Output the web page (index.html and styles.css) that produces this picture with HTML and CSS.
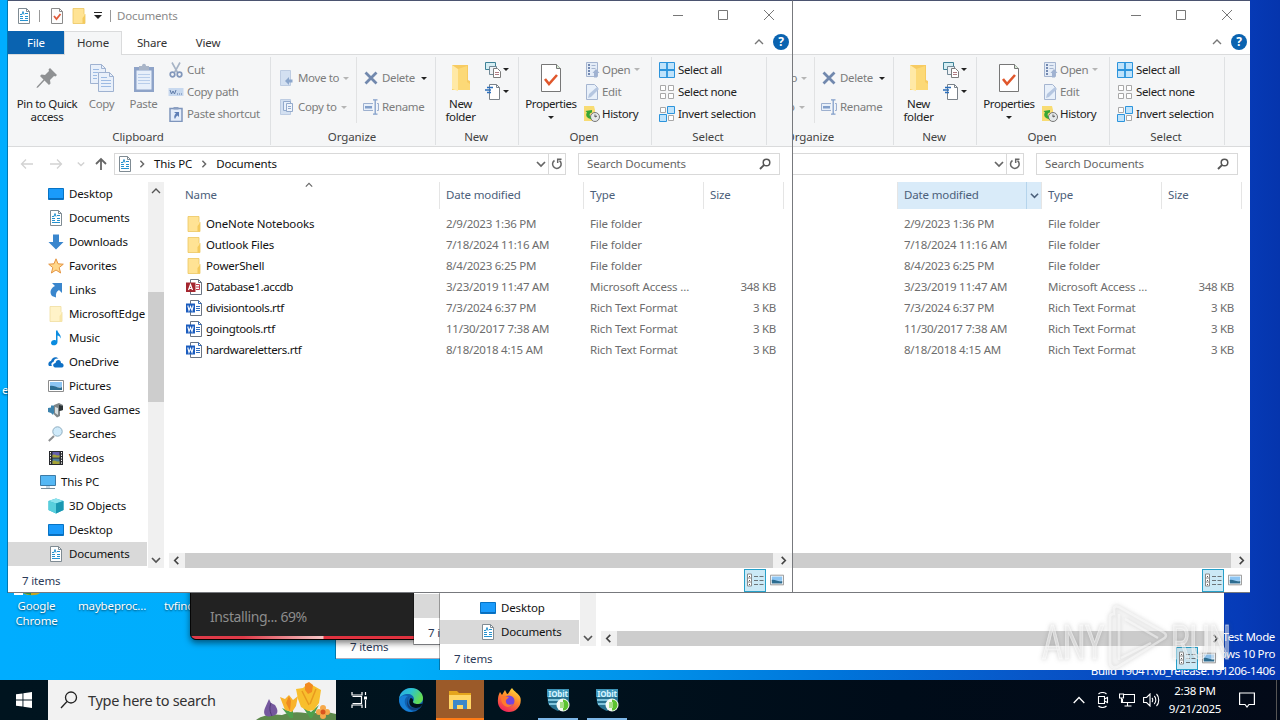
FILE: index.html
```html
<!DOCTYPE html>
<html lang="en">
<head>
  <meta charset="UTF-8">
  <meta name="viewport" content="width=device-width, initial-scale=1.0">
  <title>Documents</title>
  <link rel="stylesheet" href="styles.css">
</head>
<body>

  <!-- Icons -->
  <svg class="sprite" xmlns="http://www.w3.org/2000/svg">
    <symbol id="i-doc" viewBox="0 0 16 16"><path d="M2.500 .5h8l3 3v12h-11z" fill="#fff" stroke="#7f8b93"/><path d="M10.500 .5v3h3" fill="none" stroke="#7f8b93"/><path d="M4 6.500h2l1-3 1 3M9 5.500h3M4 8.500h3M9 8.500h3M4 10.500h3M9 10.500h3M4 12.500h8" fill="none" stroke="#2592cf"/></symbol>
    <symbol id="i-props" viewBox="0 0 16 16"><path d="M2.500 .5h8l3 3v12h-11z" fill="#fdfdfd" stroke="#8b8b8b"/><path d="M10.500 .5v3h3" fill="none" stroke="#8b8b8b"/><path d="M5 8l2.500 3 4-5" fill="none" stroke="#e05a3a" stroke-width="1.800"/></symbol>
    <symbol id="i-folder" viewBox="0 0 16 16"><path d="M2 .5h11v5l1 1v9H2z" fill="#ffe394" stroke="#ecc75f" stroke-width=".8"/><path d="M11.500 15.500V10l2.500-3v8.500z" fill="#f4ca5c"/></symbol>
    <symbol id="i-folder-pale" viewBox="0 0 16 16"><path d="M2 .5h11v5l1 1v9H2z" fill="#fff3c8" stroke="#f0dda0" stroke-width=".8"/><path d="M11.500 15.500V10l2.500-3v8.500z" fill="#f8e6a8"/></symbol>
    <symbol id="i-desktop" viewBox="0 0 16 16"><path d="M.5 2.500h15v11H.5z" fill="#1a9bfb" stroke="#0773c4"/><path d="M1 12h14v1H1z" fill="#0a6dbd"/></symbol>
    <symbol id="i-down" viewBox="0 0 16 16"><path d="M5 .5h6V8h4.500L8 15.500.5 8H5z" fill="#3a86cd"/></symbol>
    <symbol id="i-star" viewBox="0 0 16 16"><path d="M8 .8l2 5 5.300.400-4.100 3.400 1.400 5.400L8 12l-4.600 3 1.400-5.400L.7 6.200 6 5.800z" fill="#ffd78a" stroke="#e49442"/></symbol>
    <symbol id="i-link" viewBox="0 0 16 16"><path d="M4 1h10v10l-3-3c-2.500 1.500-3.500 3.500-3 7.500L4 14C1 10 3 6 7 4z" fill="#3a86cd"/></symbol>
    <symbol id="i-music" viewBox="0 0 16 16"><path d="M8 .5h1.500c.5 3 4 4 3 8-.5-2-1.500-3-3-3V12c0 4-6.500 4.500-6.500 1 0-2.500 3-3.500 5-2.500z" fill="#0a8ce0"/></symbol>
    <symbol id="i-onedrive" viewBox="0 0 16 16"><path d="M1 12c-2-3 1-5 2-5C4 3 8 2 10.500 4.500 7 4 6 6 5.500 8 3 8.500 3 11 4 12zM6 13c-2-2 0-4 1.500-4C8 5 13 5 13 9c3 0 3.500 4 1 4.500H7z" fill="#0f70c5"/></symbol>
    <symbol id="i-picture" viewBox="0 0 16 16"><path d="M.5 2.500h15v11H.5z" fill="#fff" stroke="#8c8c8c"/><path d="M2 4h12v5H2z" fill="#8cc5f3"/><path d="M2 8c4-1 8 3 12 1v3H2z" fill="#2d6d91"/></symbol>
    <symbol id="i-games" viewBox="0 0 16 16"><path d="M0 6l3-.5V3.500h3l1 5.500-2 4-2-2-3-1z" fill="#3d83ad"/><path d="M6 3l5-2 4 2v5l-3 1v5l-3 1.500-3-3z" fill="#7f8688"/><path d="M11 3l4 1v4l-4 1z" fill="#2d3436"/><path d="M7 5l3 1v7l-3-2z" fill="#d8dfe1"/></symbol>
    <symbol id="i-searches" viewBox="0 0 16 16"><path d="M6 10L.8 15" stroke="#8d8f91" stroke-width="2"/><circle cx="9.500" cy="5.500" r="4.700" fill="#cfeafa" stroke="#8fadbf"/></symbol>
    <symbol id="i-video" viewBox="0 0 16 16"><path d="M1 1h14v14H1z" fill="#27292d"/><path d="M4.500 2h7v5.500h-7z" fill="#655fae"/><path d="M4.500 8.500h7V14h-7z" fill="#4e7f9d"/><path d="M4.500 5c3-2 4 2 7 0v2.500h-7zM4.500 11c3-2 4 2 7 0v3h-7z" fill="#a5a336"/><path d="M2.500 2v12M13.500 2v12" stroke="#fff" stroke-dasharray="1.300 1.300"/></symbol>
    <symbol id="i-pc" viewBox="0 0 16 16"><path d="M.5 1.500h15v10H.5z" fill="#55b8f5" stroke="#3d7ba6"/><path d="M6 12h4v2H6z" fill="#c5d8e5"/><path d="M1 14.500h14" stroke="#778c99"/></symbol>
    <symbol id="i-cube" viewBox="0 0 16 16"><path d="M8 .5L15.500 3v9L8 15.500.5 12V3z" fill="#2cb3cb"/><path d="M8 .5L15.500 3 8 5.500.5 3z" fill="#8be3ee"/><path d="M.5 3L8 5.500v10L.5 12z" fill="#58cfdd"/><path d="M8 5.500L15.500 3v9L8 15.500z" fill="#1a97b1"/></symbol>
    <symbol id="i-word" viewBox="0 0 16 16"><path d="M4.500.5h8l3 3v12h-11z" fill="#fff" stroke="#6a7483"/><path d="M12.500.5v3h3M10 6.500h4M10 8.500h4M10 10.500h4" fill="none" stroke="#2f6cc0"/><path d="M0 3.500h9v9H0z" fill="#1b5cbe"/><path d="M1.800 5.500L3 10.500l1.500-4 1.500 4 1.200-5" fill="none" stroke="#fff" stroke-width="1.100"/></symbol>
    <symbol id="i-access" viewBox="0 0 16 16"><path d="M4.500.5h8l3 3v12h-11z" fill="#fff" stroke="#6a7483"/><path d="M12.500.5v3h3" fill="none" stroke="#6a7483"/><path d="M10 5.500h3.500v5H10M10 8h3.500" fill="none" stroke="#c0394a"/><path d="M0 3.500h9.500v9.500H0z" fill="#a4262f"/><path d="M2.500 11l2-5.500 2 5.500M3 9.500h3" fill="none" stroke="#fff" stroke-width="1.200"/></symbol>
    <symbol id="i-pin" viewBox="0 0 24 24"><path d="M15 2l7 7-1.500 1.500-1.500-.5-4 4 .5 3.500L14 19l-4.500-4.500L3 21.500l-1.500.5.5-1.500L8.500 13.500 5 10l1.500-1.500 3.500.5 4-4-.5-1.500z" fill="#8f9193"/></symbol>
    <symbol id="i-copy" viewBox="0 0 26 30"><g fill="#e9f0fa" stroke="#9fb2d1"><path d="M1.500 1.500h11l4 4v15h-15z"/><path d="M9.500 9.500h11l4 4v15h-15z"/></g><path d="M12.500 1.500v4h4M20.500 9.500v4h4" fill="none" stroke="#9fb2d1"/><path d="M4 6.500h6M4 9.500h5M4 12.500h4M4 15.500h4M12 14.500h6M12 17.500h10M12 20.500h10M12 23.500h10" stroke="#9cbae3"/></symbol>
    <symbol id="i-paste" viewBox="0 0 24 30"><path d="M2 4h20v25H2z" fill="#8ea3c8"/><path d="M4.500 7.500h15v19h-15z" fill="#e7effa"/><path d="M7 3h3c0-3 4-3 4 0h3v4H7z" fill="#a9b5c8"/><path d="M6 11.500h12M6 14.500h12M6 17.500h12M6 20.500h12" stroke="#b8cdea"/></symbol>
    <symbol id="i-cut" viewBox="0 0 16 16"><path d="M4 .5l5.500 10M12 .5L6.500 10.500" stroke="#a7b4c6" stroke-width="1.600"/><g fill="none" stroke="#8297bb" stroke-width="1.700"><circle cx="4.500" cy="12.500" r="2.300"/><circle cx="11.500" cy="12.500" r="2.300"/></g></symbol>
    <symbol id="i-path" viewBox="0 0 16 16"><path d="M.5 4h15v8H.5z" fill="#c8d9ef"/><path d="M2 6l1.500 4L5 7l1.500 3L8 6M9 10h1M11 10h1M13 10h1" fill="none" stroke="#5f7ba8"/></symbol>
    <symbol id="i-shortcut" viewBox="0 0 16 16"><path d="M2 2.500h12v13H2z" fill="#e4edfa" stroke="#7e95bc" stroke-width="1.500"/><path d="M5.500 1h5v2.500h-5z" fill="#8ca0c2"/><path d="M6 6h5v5L9.500 9.500C8 10.500 7.500 12 7 13c-1.500-2-.5-4.500 1-5.500z" fill="#5e7fb6"/></symbol>
    <symbol id="i-move" viewBox="0 0 16 16"><path d="M1.500.5h10v15h-10z" fill="#d3e0f1" stroke="#bdcce2"/><path d="M6 11l4-4v2.500h3.500v3H10V15z" fill="#8ba6cc"/></symbol>
    <symbol id="i-copyto" viewBox="0 0 16 16"><path d="M1.500.5h10v15h-10z" fill="#d3e0f1" stroke="#bdcce2"/><path d="M4.500 2.500h7v9h-7z" fill="#e8f0fa" stroke="#93aacc"/><path d="M7.500 4.500h6v8h-6z" fill="#eff4fb" stroke="#93aacc"/><path d="M9 7.500h3M9 9.500h3" stroke="#93aacc"/></symbol>
    <symbol id="i-delete" viewBox="0 0 16 16"><path d="M2.500 2.500l11 11M13.500 2.500l-11 11" stroke="#7188ad" stroke-width="2.800"/></symbol>
    <symbol id="i-rename" viewBox="0 0 16 16"><path d="M10 4.500H.5v7H10M14 4.500h1.500v7H14" fill="#e8f0fa" stroke="#9db0cf"/><path d="M2 7h7v2.500H2z" fill="#829fca"/><path d="M10 .8h4.500M12.200 1v14M10 15.200h4.500" stroke="#829fca" stroke-width="1.300"/></symbol>
    <symbol id="i-newfolder" viewBox="0 0 22 28"><path d="M2 1h16v15l2 1v9H2z" fill="#f7cb62"/><path d="M2 1l6 4v22l-6-2z" fill="#ffe9a6"/><path d="M8 5l9-3v16l3 2v6H8z" fill="#fcd977"/></symbol>
    <symbol id="i-newitem" viewBox="0 0 16 16"><path d="M.5.500h10v7H.5z" fill="#d6eef3" stroke="#3f8297"/><path d="M4.500 4.500h7v8h-7z" fill="#eef2f5" stroke="#718997"/><path d="M8.500 6.500h4l3 3v6h-7z" fill="#fff" stroke="#7b7b7b"/><path d="M10 10.500h4M10 12.500h4" stroke="#b07c83"/></symbol>
    <symbol id="i-easy" viewBox="0 0 16 16"><path d="M4.500 .5h7l3 3v12h-10z" fill="#fff" stroke="#7a828a"/><path d="M11.500.5v3h3" fill="none" stroke="#7a828a"/><path d="M2 3.500h6M0 6h6M2 8.500h4" stroke="#2a6ebb" stroke-width="1.300"/></symbol>
    <symbol id="i-bigprops" viewBox="0 0 24 30"><path d="M2.500 1.500h15l4 4v23h-19z" fill="#fff" stroke="#777"/><path d="M17.500 1.500v4h4" fill="#d8ecd6" stroke="#777"/><path d="M6 16l4 5 8-9" fill="none" stroke="#e0572c" stroke-width="2.600"/></symbol>
    <symbol id="i-open" viewBox="0 0 16 16"><path d="M2.500.5h11v14h-11z" fill="#e4ecf7" stroke="#a5b5d0"/><path d="M4 3h2M4 6h2M4 9h2M4 12h2" stroke="#7389b1" stroke-width="2"/><path d="M7.500 3.500h4M7.500 6.500h4" stroke="#a5b5d0"/><path d="M12 7l3.500 4H13v4.500h-3V11H8.500z" fill="#a0b2d1"/></symbol>
    <symbol id="i-edit" viewBox="0 0 16 16"><path d="M2.500.5h8l3 3v12h-11z" fill="#e8f0fa" stroke="#a5b5d0"/><path d="M4 14l1-4 8-7 2 2-8 8z" fill="#b5c6e0"/></symbol>
    <symbol id="i-history" viewBox="0 0 16 16"><path d="M0 0h10l1 4v11H0z" fill="#f8dc73"/><circle cx="11" cy="11" r="4.500" fill="#e4e8e9" stroke="#777"/><path d="M11 8.500V11l2-1" fill="none" stroke="#555"/><path d="M8 4v2.500C5 7 5 9 7.500 13 3 13 1 9 3 6.500L1.500 5z" fill="#36a635"/></symbol>
    <symbol id="i-selall" viewBox="0 0 16 16"><path d="M.5.500h15v15H.5z" fill="#bfe3fb" stroke="#2c94dc"/><path d="M8 0v16M0 8h16" stroke="#2c94dc" stroke-width="1.800"/></symbol>
    <symbol id="i-selnone" viewBox="0 0 16 16"><path d="M1.500 1.500h5v5h-5zM9.500 1.500h5v5h-5zM1.500 9.500h5v5h-5zM9.500 9.500h5v5h-5z" fill="#fff" stroke="#a8a8a8"/></symbol>
    <symbol id="i-selinv" viewBox="0 0 16 16"><path d="M1.500 1.500h5v5h-5zM9.500 9.500h5v5h-5z" fill="#fff" stroke="#a8a8a8"/><path d="M8.500.500h7v7h-7zM.5 8.500h7v7h-7z" fill="#bfe3fb" stroke="#2c94dc"/></symbol>
    <symbol id="i-chev-down" viewBox="0 0 10 10"><path d="M1 3l4 4 4-4" fill="none" stroke="currentColor" stroke-width="1.700"/></symbol>
    <symbol id="i-chev-up" viewBox="0 0 10 10"><path d="M1 7l4-4 4 4" fill="none" stroke="currentColor" stroke-width="1.400"/></symbol>
    <symbol id="i-chev-left" viewBox="0 0 10 10"><path d="M7 1L3 5l4 4" fill="none" stroke="currentColor" stroke-width="1.800"/></symbol>
    <symbol id="i-chev-right" viewBox="0 0 10 10"><path d="M3 1l4 4-4 4" fill="none" stroke="currentColor" stroke-width="1.800"/></symbol>
    <symbol id="i-arrow" viewBox="0 0 14 14"><path d="M13 7H1.500M6 2.500L1.500 7 6 11.500" fill="none" stroke="currentColor" stroke-width="1.300"/></symbol>
    <symbol id="i-arrow-up" viewBox="0 0 14 14"><path d="M7 13V2M2 7l5-5 5 5" fill="none" stroke="currentColor" stroke-width="1.800"/></symbol>
    <symbol id="i-refresh" viewBox="0 0 12 12"><path d="M8.500 2.500A4.300 4.300 0 1 1 3.500 2.700" fill="none" stroke="#666" stroke-width="1.500"/><path d="M1.500 1.200h3.800V5" fill="none" stroke="#666" stroke-width="1.500"/></symbol>
    <symbol id="i-find" viewBox="0 0 12 12"><circle cx="7.500" cy="4.500" r="3.300" fill="none" stroke="#555" stroke-width="1.500"/><path d="M5.200 6.800L1 11" stroke="#555" stroke-width="1.900"/></symbol>
    <symbol id="i-details" viewBox="0 0 18 14"><path d="M1.500 1h4v12h-4zM1.500 5h4M1.500 9h4" fill="#fff" stroke="#8a8a8a"/><path d="M3.500 2v10" stroke="#555" stroke-dasharray="1 3" stroke-dashoffset="-1"/><path d="M8 3.500h4M13.500 3.500h4M8 7.500h4M13.500 7.500h4M8 11.500h4M13.500 11.500h4" stroke="#6c7478"/></symbol>
    <symbol id="i-iobit" viewBox="0 0 24 24"><path d="M1 1h22v14c-3 4-7 6-11 8C7 21 3 18 2 15z" fill="#27718f"/><path d="M1 1h22v8H1z" fill="#3d94b8"/><path d="M2 11h15v2H2zM3 15h10v2H3z" fill="#7fc4dc"/><text x="12" y="8.500" font-size="8" font-weight="700" fill="#d8f5ff" text-anchor="middle" font-family="Noto Sans, sans-serif">IObit</text><circle cx="17" cy="17" r="6.500" fill="#f5f8f3"/><path d="M17 11.500a5.500 5.500 0 0 1 0 11z" fill="#5cc32f"/><path d="M14 14h4v6h-4z" fill="#a4df85"/></symbol>
  </svg>

  <!-- Desktop -->
  <div class="desktop">
    <div class="shortcut edge-label">e</div>
    <svg class="chrome-tip" viewBox="0 0 40 3"><path d="M6 0h9v2H6z" fill="#fff"/><path d="M15 0h17c-3 3-13 3-17 0z" fill="#c6a520"/><path d="M15 0h8v2z" fill="#26904a"/></svg>
    <div class="shortcut chrome-label">Google<br>Chrome</div>
    <div class="shortcut maybe-label">maybeproc...</div>
    <div class="shortcut tv-label">tvfind</div>
    <div class="build-info">Test Mode<br>Windows 10 Pro<br>Build 19041.vb_release.191206-1406</div>

    <div class="installer">
      <div class="installer-text">Installing... 69%</div>
      <div class="installer-bar"></div>
    </div>
  </div>

  <!-- Explorer window, one copy is opened per entry in the script -->
  <template id="explorer">
    <div class="window">
      <div class="titlebar">
        <svg class="ic"><use href="#i-doc"/></svg><i class="bar"></i>
        <svg class="ic props"><use href="#i-props"/></svg>
        <svg class="ic fold"><use href="#i-folder"/></svg>
        <svg class="qat" viewBox="0 0 8 7"><path d="M0 .5h8" stroke="#222"/><path d="M0 3h8L4 7z" fill="#222"/></svg><i class="bar"></i>
        <span class="title">Documents</span>
        <svg class="controls" viewBox="0 0 110 12"><path d="M7 6.500h10M52.500 1.500h9v9h-9zM98 1l10 10M108 1L98 11" fill="none" stroke="#777"/></svg>
      </div>
      <div class="tabs">
        <div class="tab file">File</div><div class="tab home">Home</div><div class="tab">Share</div><div class="tab">View</div>
        <svg class="collapse"><use href="#i-chev-up"/></svg><b class="help">?</b>
      </div>

      <div class="ribbon">
        <div class="group clipboard">
          <div class="tools">
            <div class="big pin"><svg><use href="#i-pin"/></svg><span>Pin to Quick<br>access</span></div>
            <div class="big copy off"><svg><use href="#i-copy"/></svg><span>Copy</span></div>
            <div class="big paste off"><svg><use href="#i-paste"/></svg><span>Paste</span></div>
            <div class="small off">
              <div><svg><use href="#i-cut"/></svg>Cut</div>
              <div><svg><use href="#i-path"/></svg>Copy path</div>
              <div><svg><use href="#i-shortcut"/></svg>Paste shortcut</div>
            </div>
          </div>
          <div class="group-name">Clipboard</div>
        </div>
        <div class="group organize">
          <div class="tools">
            <div class="small wide off move">
              <div><svg><use href="#i-move"/></svg>Move to<i class="drop"></i></div>
              <div><svg><use href="#i-copyto"/></svg>Copy to<i class="drop"></i></div>
            </div>
            <div class="small wide off del">
              <div><svg><use href="#i-delete"/></svg>Delete<i class="drop dark"></i></div>
              <div><svg><use href="#i-rename"/></svg>Rename</div>
            </div>
          </div>
          <div class="group-name">Organize</div>
        </div>
        <div class="group new">
          <div class="tools">
            <div class="big folder"><svg><use href="#i-newfolder"/></svg><span>New<br>folder</span></div>
            <div class="small">
              <div><svg><use href="#i-newitem"/></svg><i class="drop dark"></i></div>
              <div><svg><use href="#i-easy"/></svg><i class="drop dark"></i></div>
            </div>
          </div>
          <div class="group-name">New</div>
        </div>
        <div class="group open">
          <div class="tools">
            <div class="big properties"><svg><use href="#i-bigprops"/></svg><span>Properties</span><i class="drop dark"></i></div>
            <div class="small">
              <div class="off"><svg><use href="#i-open"/></svg>Open<i class="drop"></i></div>
              <div class="off"><svg><use href="#i-edit"/></svg>Edit</div>
              <div><svg><use href="#i-history"/></svg>History</div>
            </div>
          </div>
          <div class="group-name">Open</div>
        </div>
        <div class="group select">
          <div class="tools">
            <div class="small">
              <div><svg><use href="#i-selall"/></svg>Select all</div>
              <div><svg><use href="#i-selnone"/></svg>Select none</div>
              <div><svg><use href="#i-selinv"/></svg>Invert selection</div>
            </div>
          </div>
          <div class="group-name">Select</div>
        </div>
      </div>

      <div class="address">
        <svg class="nav back"><use href="#i-arrow"/></svg>
        <svg class="nav forward"><use href="#i-arrow"/></svg>
        <svg class="nav recent"><use href="#i-chev-down"/></svg>
        <svg class="nav up"><use href="#i-arrow-up"/></svg>
        <div class="path">
          <svg class="ic"><use href="#i-doc"/></svg><svg class="crumb"><use href="#i-chev-right"/></svg><span class="pc">This PC</span><svg class="crumb"><use href="#i-chev-right"/></svg><span>Documents</span>
          <svg class="history"><use href="#i-chev-down"/></svg><div class="refresh"><svg><use href="#i-refresh"/></svg></div>
        </div>
        <div class="search">Search Documents<svg><use href="#i-find"/></svg></div>
      </div>

      <div class="content">
        <div class="tree">
          <div><svg><use href="#i-desktop"/></svg>Desktop</div>
          <div><svg><use href="#i-doc"/></svg>Documents</div>
          <div><svg><use href="#i-down"/></svg>Downloads</div>
          <div><svg><use href="#i-star"/></svg>Favorites</div>
          <div><svg><use href="#i-link"/></svg>Links</div>
          <div><svg><use href="#i-folder-pale"/></svg>MicrosoftEdge</div>
          <div><svg><use href="#i-music"/></svg>Music</div>
          <div><svg><use href="#i-onedrive"/></svg>OneDrive</div>
          <div><svg><use href="#i-picture"/></svg>Pictures</div>
          <div><svg><use href="#i-games"/></svg>Saved Games</div>
          <div><svg><use href="#i-searches"/></svg>Searches</div>
          <div><svg><use href="#i-video"/></svg>Videos</div>
          <div class="root"><svg><use href="#i-pc"/></svg>This PC</div>
          <div><svg><use href="#i-cube"/></svg>3D Objects</div>
          <div><svg><use href="#i-desktop"/></svg>Desktop</div>
          <div class="selected"><svg><use href="#i-doc"/></svg>Documents</div>
        </div>
        <div class="vscroll">
          <svg><use href="#i-chev-up"/></svg><div class="thumb"></div><svg class="end"><use href="#i-chev-down"/></svg>
        </div>
        <div class="list">
          <div class="row head"><span>Name</span><span class="date">Date modified<i><svg><use href="#i-chev-down"/></svg></i></span><span>Type</span><span>Size</span><svg class="sort"><use href="#i-chev-up"/></svg></div>
          <div class="files"></div>
          <div class="hscroll"><svg><use href="#i-chev-left"/></svg><div class="thumb"></div><svg><use href="#i-chev-right"/></svg></div>
        </div>
      </div>

      <div class="status">
        <span>7 items</span>
        <div class="view-details"><svg><use href="#i-details"/></svg></div>
        <svg class="view-large"><use href="#i-picture"/></svg>
      </div>
    </div>
  </template>

  <!-- Watermark -->
  <svg class="watermark" viewBox="0 0 200 70">
    <g font-family="Roboto, sans-serif" font-size="49">
      <text x="5" y="55" textLength="62" lengthAdjust="spacingAndGlyphs">ANY</text>
      <text x="134" y="55" textLength="60" lengthAdjust="spacingAndGlyphs">RUN</text>
    </g>
    <path d="M73 58V13c0-2 2-3 4-3V5c0-3 3-3 5-2l44 25c4 2 4 5 0 7L82 62c-5 3-9 1-9-4zM82 10v46M88 15l33 19M84 54l30-15"/>
  </svg>

  <!-- Taskbar -->
  <div class="taskbar">
    <div class="start"><svg viewBox="0 0 16 16"><path d="M0 2.300l6.500-.9v6.100H0zM7.400 1.200L16 0v7.500H7.400zM0 8.400h6.500v6.200L0 13.700zM7.400 8.400H16V16l-8.600-1.200z" fill="#fff"/></svg></div>
    <div class="task-search">
      <svg class="lens" viewBox="0 0 18 18"><circle cx="11" cy="6.500" r="5.500" fill="none" stroke="#222" stroke-width="1.300"/><path d="M7 10.500L1 17" stroke="#222" stroke-width="1.300"/></svg>
      <span>Type here to search</span>
      <svg class="flowers" viewBox="0 0 80 40">
        <path d="M0 40c8-6 18-6 26-5 12-5 24-2 30-1 8-3 16-2 24 0v6z" fill="#5e8a4c"/>
        <path d="M34 38l-8-10 9 4 2-8v14M54 38L46 26l9 6 8-7-7 13" fill="#4da04b"/>
        <path d="M13 19l2 4 4 2c4 6 3 10-3 11-8 2-9-3-7-8z" fill="#75589e"/><path d="M15 23c-2 5-1 9 1 13" stroke="#4f3a76" fill="none"/>
        <path d="M24 17l5 2 4-4 4 5 5-4-2 10-4 6-7-2z" fill="#f9b42c"/><path d="M33 16l2 5-1 10-4-8z" fill="#ee8a22"/>
        <path d="M40 9l7-1 5-5 6 3 7 4-2 13-5 7-6 1-7-4-3-8z" fill="#f8bf2d"/><path d="M49 4l4-2 4 3-1 7-4 2-3-4z" fill="#f28a20"/><path d="M46 11l7 14M60 9l-6 15" stroke="#e99a1e" stroke-width="1.500"/>
        <g fill="#f6a94a"><circle cx="67" cy="28" r="3"/><circle cx="71" cy="32" r="3"/><circle cx="67" cy="36" r="3"/><circle cx="63" cy="32" r="3"/></g><circle cx="67" cy="32" r="2.500" fill="#d9541e"/>
      </svg>
    </div>
    <div class="task view"><svg viewBox="0 0 18 16"><path d="M1 0v3h10V0M1 16v-3h10v3M1.500 4.500h9v7h-9M14.500 0v3M14.500 8v8" fill="none" stroke="#fff" stroke-width="1.200"/><path d="M13 4.500h3v3h-3z" fill="#fff"/></svg></div>
    <div class="task edge"><svg viewBox="0 0 24 24">
      <defs><linearGradient id="eg" x1="0" y1="0" x2="1" y2=".4"><stop offset="0" stop-color="#2aa8e8"/><stop offset=".5" stop-color="#2cc3d0"/><stop offset="1" stop-color="#63dc53"/></linearGradient></defs>
      <circle cx="12" cy="12" r="12" fill="#0f61b0"/><path d="M0 11C1 4 6 0 12 0c7 0 12 5 12 10 0 4-3 6-6 6-3 0-4-1-4-2s1-1 1-3c0-3-3-5-6-5-4 0-8 2-9 5z" fill="url(#eg)"/><path d="M9 8c-5 2-5 12 5 15.500C7 25 0 19 0 11 2 7 6 7 9 8z" fill="#1781d8"/><path d="M11 8c-4 3-3 11 4 12 3 .400 5-.8 7-2 .5 0 .5.500 0 1-6 6-14 3-14-4 0-3 1-6 3-7z" fill="#123f7b"/><path d="M11.500 10c2 0 3 1.500 2.500 3s.5 3 5 3c4 0 5-1 4 1-2 4-10 4-12 0-1-2-1-5 .5-7z" fill="#00121b"/>
    </svg></div>
    <div class="task active"><svg viewBox="0 0 24 24"><path d="M1 3h8l2 2h12v5H1z" fill="#e5a51c"/><path d="M1 7h22v14H1z" fill="#ffd665"/><path d="M5 21v-9h14v9h-4v-4H9v4z" fill="#3d88c8"/></svg></div>
    <div class="task"><svg viewBox="0 0 24 24">
      <defs><linearGradient id="ff" x1=".8" y1="0" x2=".3" y2="1"><stop offset="0" stop-color="#ffe23d"/><stop offset=".45" stop-color="#ff8a2a"/><stop offset="1" stop-color="#f0205c"/></linearGradient></defs>
      <path d="M3 4l2 3 3-5 2 4c2 0 2-3 5-6 2 4 7 5 8.500 10C25 18 19 24 12 24 4 24 0 18 1 11c0-3 1-5 2-7z" fill="url(#ff)"/><circle cx="12" cy="13" r="5.500" fill="#7544dc"/><path d="M4 9c3-2 5 0 8 0l-3 3c-1 4 3 6 7 4-3 5-12 4-12-7z" fill="#ff7a2d"/>
    </svg></div>
    <div class="task running"><svg><use href="#i-iobit"/></svg></div>
    <div class="task running"><svg><use href="#i-iobit"/></svg></div>
    <div class="tray">
      <svg class="t-up" viewBox="0 0 12 8"><path d="M.7 7L6 1.500 11.300 7" fill="none" stroke="#fff" stroke-width="1.300"/></svg>
      <svg class="t-meet" viewBox="0 0 12 16"><path d="M1.500 4.500h6v7h-6zM7.500 7l3-1.500v5L7.500 9M1.500 2c2-2 6-2 8 0M1.500 14c2 2 6 2 8 0" fill="none" stroke="#fff" stroke-width="1.100"/></svg>
      <svg class="t-net" viewBox="0 0 16 14"><path d="M5 1.500h10.500v8H3.500V6M8.500 9.500v3M5.500 13h7M.5 1h4v4h-4zM2.500 5v5" fill="none" stroke="#fff" stroke-width="1.100"/></svg>
      <svg class="t-vol" viewBox="0 0 17 14"><path d="M.6 4.500h3L7 1v12L3.600 9.500h-3zM9 5c1 1 1 3 0 4M11.300 3c2 2 2 6 0 8M13.500 1c3 3 3 9 0 12" fill="none" stroke="#fff" stroke-width="1.100"/></svg>
      <div class="when">2:38 PM<br>9/21/2025</div>
      <svg class="t-note" viewBox="0 0 16 16"><path d="M.6 1h14.800v11.500H10L8 15l-2-2.500H.6z" fill="none" stroke="#fff" stroke-width="1.200"/></svg>
    </div>
  </div>

  <script>
    const files = [
      ['folder', 'OneNote Notebooks', '2/9/2023 1:36 PM', 'File folder', ''],
      ['folder', 'Outlook Files', '7/18/2024 11:16 AM', 'File folder', ''],
      ['folder', 'PowerShell', '8/4/2023 6:25 PM', 'File folder', ''],
      ['access', 'Database1.accdb', '3/23/2019 11:47 AM', 'Microsoft Access ...', '348 KB'],
      ['word', 'divisiontools.rtf', '7/3/2024 6:37 PM', 'Rich Text Format', '3 KB'],
      ['word', 'goingtools.rtf', '11/30/2017 7:38 AM', 'Rich Text Format', '3 KB'],
      ['word', 'hardwareletters.rtf', '8/18/2018 4:15 AM', 'Rich Text Format', '3 KB']
    ];
    const rows = files.map(f => `<div class="row"><span class="name"><svg><use href="#i-${f[0]}"/></svg>${f[1]}</span><span>${f[2]}</span><span>${f[3]}</span><span class="size">${f[4]}</span></div>`).join('');

    const desktop = document.querySelector('.desktop');
    // back to front
    ['w-bottom', 'w-left', 'w-low', 'w-back', 'w-front'].forEach(name => {
      const win = document.getElementById('explorer').content.cloneNode(true).firstElementChild;
      win.classList.add(name);
      win.querySelector('.files').innerHTML = rows;
      desktop.appendChild(win);
    });
  </script>
</body>
</html>
```
FILE: styles.css
```css
* { margin:0; padding:0; box-sizing:border-box; }
body { width:1280px; height:720px; overflow:hidden; font-family:'Noto Sans', sans-serif; font-size:11.5px; line-height:16px; letter-spacing:-0.15px; color:#111; display:flex; flex-direction:column; }
svg { display:block; flex:none; width:16px; height:16px; }
.sprite { position:absolute; width:0; height:0; }

/* Desktop */
.desktop { position:relative; height:680px; overflow:hidden; background:linear-gradient(90deg,#00adff 0,#00aef9 400px,#0092ea 640px,#0074da 840px,#0856c8 1030px,#063bb8 1240px,#0535ad 1280px); }
.shortcut { position:absolute; color:#fff; text-align:center; line-height:15px; text-shadow:0 1px 2px rgba(0,0,0,0.6); }
.edge-label { left:2px; top:382px; }
.chrome-label { left:8px; top:598px; width:57px; }
.maybe-label { left:78px; top:598px; }
.tv-label { left:164px; top:598px; }
.chrome-tip { position:absolute; left:8px; top:593px; width:40px; height:3px; }
.build-info { position:absolute; right:5px; top:628px; color:#fff; text-align:right; line-height:17px; letter-spacing:-0.35px; white-space:nowrap; }

.installer { position:absolute; z-index:2; left:190px; top:540px; width:260px; height:100px; background:#222; border:1px solid #050505; border-radius:6px; overflow:hidden; box-shadow:0 3px 6px rgba(0,0,0,0.5); display:flex; flex-direction:column; justify-content:flex-end; }
.installer-text { color:#8d8d8d; font-size:14px; letter-spacing:-0.4px; padding:0 0 11px 19px; }
.installer-bar { height:3px; background:linear-gradient(90deg,#df3a48 0 52px,#f4c6c6 132px,#e0323f 133px); }

/* Windows */
.window { position:absolute; width:785px; height:593px; background:#fff; border:1px solid #77797d; border-left:0; border-top-color:#4b5470; box-shadow:-1px 0 0 rgba(0,0,0,0.3); display:flex; flex-direction:column; }
.w-bottom { left:336px; top:66px; z-index:1; border-color:#aab; }
.w-left { left:414px; top:52px; z-index:3; }
.w-low { left:440px; top:78px; z-index:4; width:784px; height:592px; border-right:0; border-bottom:0; }
.w-back { left:466px; top:0; z-index:5; width:784px; border-right:0; }
.w-front { left:8px; top:0; z-index:6; }

/* only the lower edge of these sticks out */
.w-bottom > *, .w-left > *, .w-low > *, .w-low .files, .w-low .head { visibility:hidden; }
.w-bottom .status, .w-left .status, .w-low .status, .w-left .selected, .w-low .content { visibility:visible; }

.titlebar { height:30px; display:flex; align-items:center; padding-left:8px; color:#8a8a8a; }
.titlebar .bar { width:1px; height:12px; background:#999; margin-left:7px; }
.titlebar .props { margin-left:9px; }
.titlebar .fold { margin-left:6px; }
.titlebar .qat { width:8px; height:7px; margin-left:7px; }
.titlebar .qat + .bar { margin-left:8px; }
.title { margin-left:6px; }
.w-back .title { visibility:hidden; }
.controls { width:110px; height:12px; margin-left:auto; margin-right:16px; margin-top:-1px; }
.tabs { height:24px; display:flex; border-bottom:1px solid #dadbdc; line-height:23px; }
.tab { width:56px; text-align:center; color:#333; }
.file { background:#0a63b0; color:#fff; }
.home { width:58px; height:24px; background:#f5f6f7; border:1px solid #dadbdc; border-bottom:0; line-height:22px; }
.tabs .tab:nth-child(3) { width:60px; }
.tabs .tab:nth-child(4) { width:52px; }
.collapse { width:10px; height:10px; margin:6px 9px 0 auto; color:#777; }
.help { width:16px; height:16px; margin:3px 3px 0 0; border-radius:50%; background:#0a63b0; color:#fff; text-align:center; line-height:16px; font-size:12px; }

/* Ribbon */
.ribbon { height:92px; background:#f5f6f7; border-bottom:1px solid #dadbdc; display:flex; padding-top:2px; color:#222; letter-spacing:-0.35px; }
.group { height:88px; border-right:1px solid #dfe1e3; display:flex; flex-direction:column; }
.tools { height:72px; display:flex; }
.group-name { text-align:center; color:#444; padding-right:2px; letter-spacing:-0.1px; }
.clipboard { width:263px; }
.organize { width:165px; }
.new { width:83px; }
.open { width:133px; }
.select { width:115px; }
.big { padding-top:6px; display:flex; flex-direction:column; align-items:center; text-align:center; line-height:13px; white-space:nowrap; }
.big svg { height:30px; }
.big span { margin-top:4px; }
.big .drop { margin:6px 0 0; }
.pin { width:78px; }
.pin svg { width:24px; height:24px; margin:3px 0; }
.copy { width:31px; }
.copy svg { width:26px; }
.paste { width:53px; }
.paste svg { width:24px; }
.folder { width:49px; }
.folder svg { width:22px; }
.properties { width:64px; letter-spacing:-0.45px; }
.properties svg { width:24px; }
.off { color:#7c7c7c; }
.small { padding-top:2px; white-space:nowrap; }
.small > div { height:22px; display:flex; align-items:center; }
.small svg { margin-right:3px; }
.clipboard .small { margin-left:-2px; }
.organize .wide { padding-top:7px; }
.wide > div { height:29px; }
.move { margin-left:8px; width:78px; border-right:1px solid #e1e2e3; height:66px; }
.del { margin-left:6px; }
.drop { border:3px solid transparent; border-top-color:#b5b5b5; border-bottom:0; margin-left:4px; }
.drop.dark { border-top-color:#222; }
.wide .drop.dark { margin-left:6px; }
.new .drop { margin-left:-1px; }
.select .small { margin-left:7px; }
.open .small { margin-left:1px; }
.open .small svg { margin-right:2px; }

/* Address bar */
.address { height:35px; display:flex; align-items:center; }
.nav { width:14px; height:14px; color:#d2d2d2; }
.back { margin-left:12px; }
.forward { margin-left:15px; transform:scaleX(-1); }
.recent { width:8px; height:8px; margin-left:14px; }
.up { margin-left:9px; color:#666; }
.path { height:22px; width:452px; margin-left:6px; border:1px solid #d9d9d9; display:flex; align-items:center; }
.path .ic { margin-left:2px; }
.crumb { width:8px; height:8px; margin:0 8px 0 5px; color:#666; }
.pc + .crumb { margin-left:8px; }
.history { width:10px; height:10px; color:#666; margin-left:auto; margin-right:2px; }
.refresh { width:17px; height:20px; border-left:1px solid #d9d9d9; display:flex; align-items:center; justify-content:center; }
.refresh svg { width:12px; height:12px; transform:scaleX(-1); }
.search { width:202px; height:22px; margin-left:12px; border:1px solid #d9d9d9; padding:0 8px; color:#666; display:flex; align-items:center; justify-content:space-between; }
.search svg { width:12px; height:12px; }

/* Tree and file list */
.content { height:387px; display:flex; }
.tree { width:140px; overflow:hidden; white-space:nowrap; }
.tree div { height:24px; width:139px; padding-left:40px; display:flex; align-items:center; overflow:hidden; }
.tree svg { margin-right:5px; }
.tree .root { padding-left:32px; }
.tree .selected { background:#d9d9d9; }
.vscroll { width:16px; background:#f0f0f0; display:flex; flex-direction:column; align-items:center; color:#555; }
.vscroll svg { width:10px; height:10px; margin-top:4px; }
.vscroll .thumb { width:16px; height:110px; margin-top:96px; background:#cdcdcd; }
.vscroll .end { margin:auto 0 3px; }
.list { width:628px; padding-left:5px; display:flex; flex-direction:column; }
.row { height:21px; margin-left:10px; display:grid; grid-template-columns:261px 144px 120px 80px; align-items:center; white-space:nowrap; color:#6d6d6d; }
.row span { padding-left:6px; }
.row .name { display:flex; align-items:center; padding-left:7px; color:#111; }
.row:nth-child(n+4) .name { letter-spacing:-0.35px; }
.files .row span:nth-child(2) { letter-spacing:-0.25px; }
.name svg { margin-right:4px; }
.row .size { text-align:right; padding-right:8px; letter-spacing:-0.3px; }
.head { position:relative; height:27px; margin-bottom:5px; color:#4c607a; }
.head span { height:27px; line-height:25px; border-right:1px solid #e5e5e5; }
.head .sort { position:absolute; left:125px; top:-1px; width:10px; height:8px; color:#666; }
.date i { display:none; }
.w-back .date { display:flex; background:#d9ebf9; justify-content:space-between; }
.w-back .date i { width:15px; border-left:1px solid #b5d4ec; display:flex; align-items:center; justify-content:center; }
.date svg { width:9px; height:9px; }
.hscroll { height:15px; margin-top:auto; background:#f0f0f0; display:flex; align-items:center; justify-content:space-between; padding:0 4px 0 3px; color:#444; }
.hscroll svg { width:9px; height:9px; }
.hscroll .thumb { width:588px; height:15px; background:#cdcdcd; margin-left:4px; margin-right:auto; }
.status { height:24px; display:flex; align-items:center; padding-left:14px; color:#2b3a58; }
.status span { padding-top:1px; }
.view-details { width:22px; height:23px; margin-left:auto; background:#cbe9f6; border:1px solid #26a0c9; display:flex; align-items:center; justify-content:center; }
.view-details svg { width:18px; height:14px; }
.view-large { width:14px; height:14px; margin:0 8px 0 4px; }

/* Watermark */
.watermark { position:absolute; z-index:10; left:1037px; top:604px; width:200px; height:70px; fill:#fff; fill-opacity:0.45; stroke:#fff; stroke-opacity:0.5; stroke-width:1; filter:drop-shadow(0 0 2px rgba(80,80,80,0.5)); }
.watermark path { fill-opacity:0.12; stroke-width:2.5; }

/* Taskbar */
.taskbar { height:40px; display:flex; background:linear-gradient(90deg,#00141f,#00131e 500px,#000c19 900px,#030a18); color:#fff; }
.start { width:48px; display:flex; align-items:center; justify-content:center; }
.task-search { width:288px; background:#f2f2f2; color:#333; display:flex; align-items:center; padding-left:12px; font-size:14.5px; letter-spacing:-0.3px; }
.lens { width:18px; height:18px; margin-right:10px; }
.flowers { width:80px; height:40px; margin-left:auto; }
.task { width:48px; height:40px; margin-right:1px; display:flex; align-items:center; justify-content:center; }
.task svg { width:24px; height:24px; }
.task.view { margin-right:3px; }
.task.view svg { width:18px; height:16px; }
.active { background:#9b5a29; border-bottom:2px solid #ff7b16; padding-top:2px; }
.running { position:relative; }
.running::after { content:''; position:absolute; left:4px; bottom:0; width:40px; height:2px; background:#7db7e8; }
.tray { margin-left:auto; display:flex; align-items:center; padding-right:21px; border-right:1px solid #555; margin-right:3px; }
.t-up { width:12px; height:8px; margin-right:12px; }
.t-meet { width:12px; margin-right:10px; }
.t-net { height:14px; margin-right:8px; }
.t-vol { width:17px; height:14px; margin-right:8px; }
.when { width:54px; text-align:center; line-height:18px; letter-spacing:-0.25px; white-space:nowrap; margin-right:17px; }
```
